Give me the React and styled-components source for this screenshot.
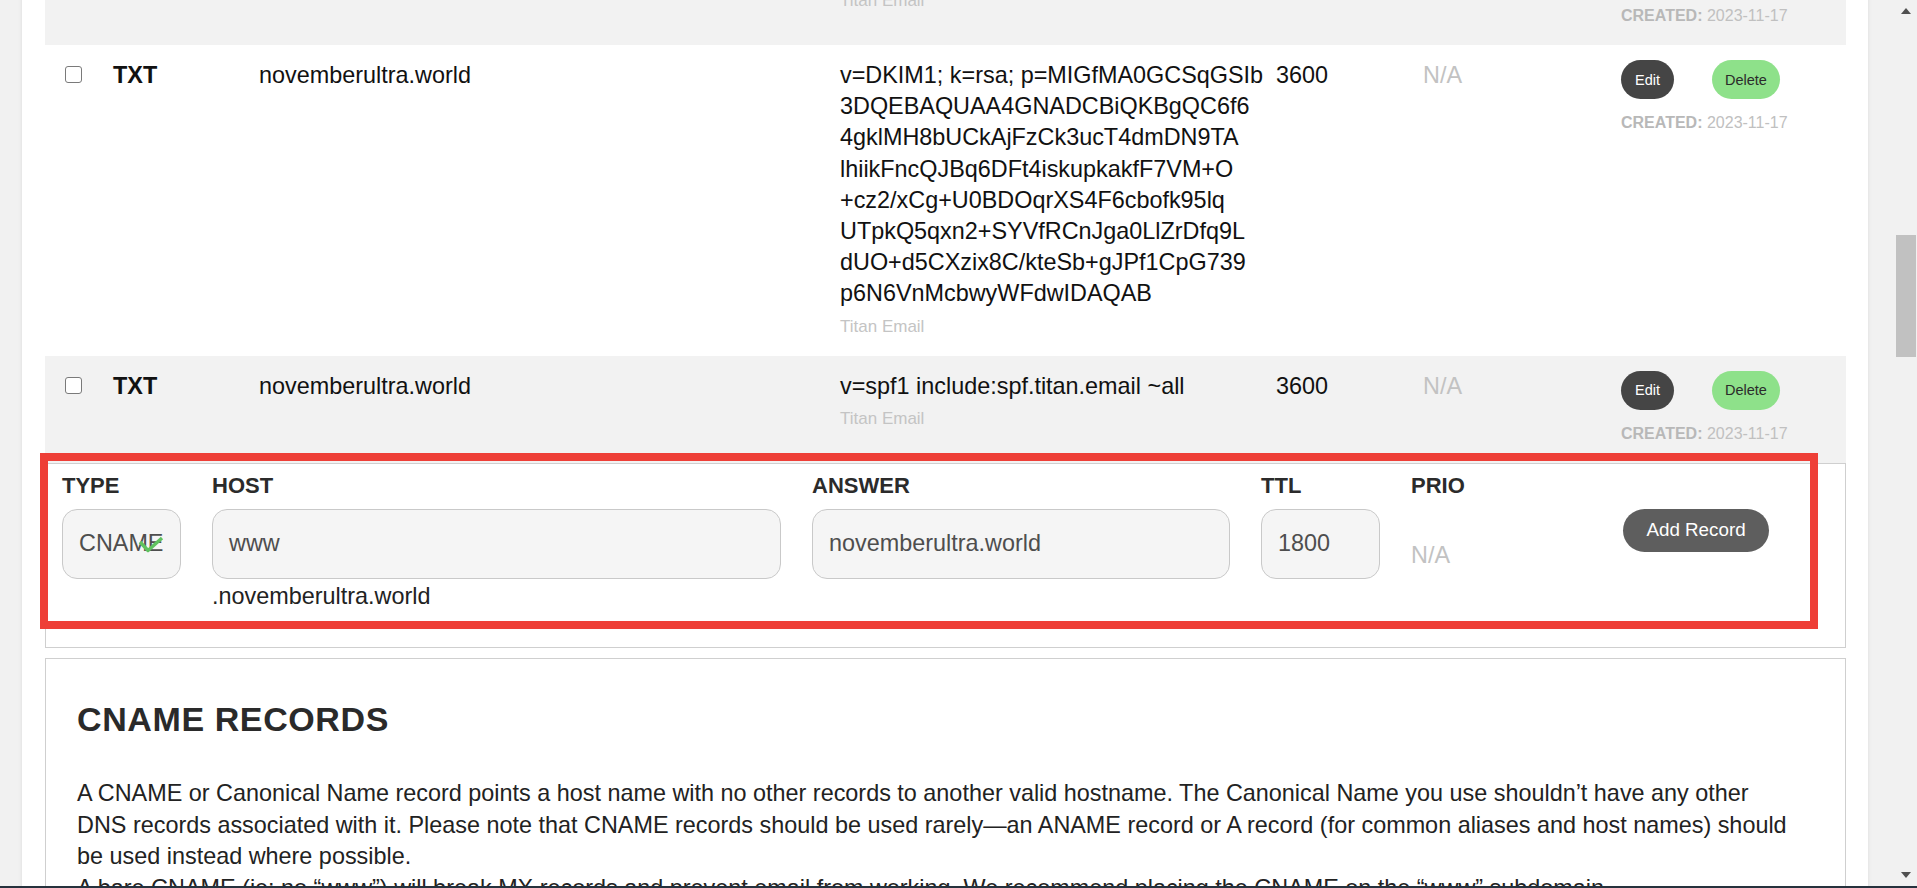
import styled, { createGlobalStyle } from "styled-components"

const GlobalStyle = createGlobalStyle`
  * { box-sizing: border-box; }
  html, body {
    margin: 0;
    padding: 0;
    height: 100%;
    overflow: hidden;
  }
  body {
    font-family: "Liberation Sans", Arial, sans-serif;
    background: #f1f1f1;
    color: #1a1a1a;
  }
`

const Screen = styled.div`
  height: 888px;
  display: flex;
  flex-direction: column;
`

const Viewport = styled.div`
  flex: 1;
  min-height: 0;
  display: flex;
`

const ScrollArea = styled.div`
  flex: 1;
  overflow: hidden;
  padding: 0 27px 0 22px;
`

const Panel = styled.div`
  background: #fff;
  box-shadow: 0 0 4px rgba(0, 0, 0, 0.09);
  padding: 0 22px 0 23px;
  min-height: 100%;
`

const Table = styled.div`
  margin-top: -10px;
`

const Row = styled.div`
  display: grid;
  grid-template-columns: 48px 146px 581px 436px 147px 198px 1fr;
  padding: ${(p) => (p.$continued ? "0" : "15px")} 0 18px 20px;
  background: ${(p) => (p.$shaded ? "#f2f2f2" : "#fff")};
  font-size: 23.4px;
  line-height: 31.2px;
`

const Check = styled.input.attrs({ type: "checkbox" })`
  appearance: none;
  width: 17px;
  height: 17px;
  margin: 6px 0 0;
  border: 1.3px solid #7a7a7a;
  border-radius: 3px;
  background: #fff;
`

const TypeCell = styled.div`
  font-weight: 700;
  color: #111;
`

const Cell = styled.div`
  color: ${(p) => (p.$muted ? "#c2c2c2" : "#111")};
`

const AnswerText = styled.div`
  white-space: pre-line;
  color: #111;
`

const Note = styled.div`
  margin-top: ${(p) => (p.$flush ? "0" : "6px")};
  font-size: 17px;
  line-height: 22px;
  color: #c4c4c4;
`

const Actions = styled.div`
  display: flex;
  flex-direction: column;
`

const ButtonRow = styled.div`
  display: flex;
  gap: 38px;
`

const Pill = styled.button`
  height: 39px;
  border: none;
  border-radius: 20px;
  padding: 0 ${(p) => (p.$wide ? "13px" : "14px")};
  font-family: inherit;
  font-size: 14.5px;
  background: ${(p) => (p.$tone === "green" ? "#8ee18a" : "#454545")};
  color: ${(p) => (p.$tone === "green" ? "#2b2b2b" : "#fff")};
`

const Created = styled.div`
  margin-top: ${(p) => (p.$flush ? "15px" : "13px")};
  font-size: 16px;
  line-height: 22px;
  color: #c0c0c0;

  b {
    color: #b8b8b8;
  }
`

const FormCard = styled.div`
  position: relative;
  background: #fff;
  border: 1px solid #cfcfcf;
  padding: 8px 16px 35px;
  display: grid;
  grid-template-columns: 119px 569px 418px 119px 181px 146px;
  grid-template-rows: 28px auto;
  column-gap: 31px;
  row-gap: 9px;
`

const Label = styled.div`
  font-size: 22px;
  font-weight: 700;
  line-height: 28px;
  color: #2b2b2b;
`

const Field = styled.div`
  display: flex;
  flex-direction: column;
`

const Box = styled.div`
  position: relative;
  height: 70px;
  display: flex;
  align-items: center;
  padding: 0 16px;
  background: #f5f5f5;
  border: 1px solid #c9c9c9;
  border-radius: 15px;
  font-size: 23.4px;
  color: #4e4e4e;
  overflow: hidden;
  white-space: nowrap;
`

const CheckMark = styled.svg`
  position: absolute;
  left: 75px;
  top: 26px;
`

const Suffix = styled.div`
  margin-top: 2px;
  font-size: 23.4px;
  line-height: 31px;
  color: #222;
`

const Muted = styled.div`
  padding-top: 31px;
  font-size: 23.4px;
  line-height: 31px;
  color: #c2c2c2;
`

const AddButton = styled.button`
  width: 146px;
  height: 43px;
  border: none;
  border-radius: 22px;
  background: #5e5e5e;
  color: #fff;
  font-family: inherit;
  font-size: 18.8px;
  padding: 0;
  white-space: nowrap;
`

const Highlight = styled.div`
  position: absolute;
  left: -6px;
  top: -11px;
  width: 1778px;
  height: 176px;
  border: 8px solid #ee3f37;
  pointer-events: none;
`

const InfoCard = styled.section`
  margin-top: 10px;
  background: #fff;
  border: 1px solid #cfcfcf;
  padding: 40px 43px 40px 31px;
`

const Heading = styled.h2`
  margin: 0 0 39px;
  font-size: 34px;
  line-height: 40.8px;
  font-weight: 700;
  letter-spacing: 0.6px;
  color: #2a2a2a;
`

const Text = styled.p`
  margin: 0;
  font-size: 23.4px;
  line-height: 31.4px;
  color: #222;
`

const Scrollbar = styled.div`
  width: 22px;
  display: flex;
  flex-direction: column;
  align-items: center;
  background: #f1f1f1;
`

const Arrow = styled.div`
  height: 22px;
  width: 100%;
  display: flex;
  align-items: center;
  justify-content: center;

  &::before {
    content: "";
    border-left: 5.5px solid transparent;
    border-right: 5.5px solid transparent;
    ${(p) => (p.$down ? "border-top" : "border-bottom")}: 6px solid #505050;
  }
`

const Track = styled.div`
  flex: 1;
  width: 100%;
  display: flex;
  justify-content: center;
`

const Thumb = styled.div`
  width: 20px;
  height: 122px;
  background: #c1c1c1;
`

const Taskbar = styled.div`
  height: 2px;
  background: #26323d;
`

const dkim = [
  "v=DKIM1; k=rsa; p=MIGfMA0GCSqGSIb",
  "3DQEBAQUAA4GNADCBiQKBgQC6f6",
  "4gklMH8bUCkAjFzCk3ucT4dmDN9TA",
  "lhiikFncQJBq6DFt4iskupkakfF7VM+O",
  "+cz2/xCg+U0BDOqrXS4F6cbofk95lq",
  "UTpkQ5qxn2+SYVfRCnJga0LlZrDfq9L",
  "dUO+d5CXzix8C/kteSb+gJPf1CpG739",
  "p6N6VnMcbwyWFdwIDAQAB",
].join("\n")

const records = [
  { type: "TXT", host: "novemberultra.world", answer: dkim, ttl: "3600", prio: null },
  { type: "TXT", host: "novemberultra.world", answer: "v=spf1 include:spf.titan.email ~all", ttl: "3600", prio: null },
]

// tail of the record scrolled above the top edge
function ContinuedRow() {
  return (
    <Row $shaded $continued>
      <div />
      <div />
      <div />
      <Note $flush>Titan Email</Note>
      <div />
      <div />
      <Actions>
        <Created $flush>
          <b>CREATED:</b> 2023-11-17
        </Created>
      </Actions>
    </Row>
  )
}

function RecordRow({ record, shaded }) {
  return (
    <Row $shaded={shaded}>
      <div>
        <Check />
      </div>
      <TypeCell>{record.type}</TypeCell>
      <Cell>{record.host}</Cell>
      <div>
        <AnswerText>{record.answer}</AnswerText>
        <Note>Titan Email</Note>
      </div>
      <Cell>{record.ttl}</Cell>
      <Cell $muted={!record.prio}>{record.prio || "N/A"}</Cell>
      <Actions>
        <ButtonRow>
          <Pill>Edit</Pill>
          <Pill $tone="green" $wide>Delete</Pill>
        </ButtonRow>
        <Created>
          <b>CREATED:</b> 2023-11-17
        </Created>
      </Actions>
    </Row>
  )
}

function AddRecordForm() {
  return (
    <FormCard>
      <Label>TYPE</Label>
      <Label>HOST</Label>
      <Label>ANSWER</Label>
      <Label>TTL</Label>
      <Label>PRIO</Label>
      <div />
      <Field>
        <Box>
          CNAME
          <CheckMark width="26" height="17" viewBox="0 0 26 17">
            <polyline points="2,6 10,14.5 24,2" fill="none" stroke="#5fc25f" strokeWidth="3.4" strokeLinejoin="round" />
          </CheckMark>
        </Box>
      </Field>
      <Field>
        <Box>www</Box>
        <Suffix>.novemberultra.world</Suffix>
      </Field>
      <Field>
        <Box>novemberultra.world</Box>
      </Field>
      <Field>
        <Box>1800</Box>
      </Field>
      <Muted>N/A</Muted>
      <div>
        <AddButton>Add Record</AddButton>
      </div>
      <Highlight />
    </FormCard>
  )
}

export default function App() {
  return (
    <Screen>
      <GlobalStyle />
      <Viewport>
        <ScrollArea>
          <Panel>
            <Table>
              <ContinuedRow />
              {records.map((r, i) => (
                <RecordRow key={i} record={r} shaded={i % 2 === 1} />
              ))}
            </Table>
            <AddRecordForm />
            <InfoCard>
              <Heading>CNAME RECORDS</Heading>
              <Text>
                A CNAME or Canonical Name record points a host name with no other records to another valid hostname. The
                Canonical Name you use shouldn’t have any other DNS records associated with it. Please note that CNAME
                records should be used rarely—an ANAME record or A record (for common aliases and host names) should be
                used instead where possible.
                <br />
                A bare CNAME (ie: no “www”) will break MX records and prevent email from working. We recommend placing the
                CNAME on the “www” subdomain.
              </Text>
            </InfoCard>
          </Panel>
        </ScrollArea>
        <Scrollbar>
          <Arrow />
          <Track>
            <Thumb style={{ marginTop: 213 }} />
          </Track>
          <Arrow $down />
        </Scrollbar>
      </Viewport>
      <Taskbar />
    </Screen>
  )
}
